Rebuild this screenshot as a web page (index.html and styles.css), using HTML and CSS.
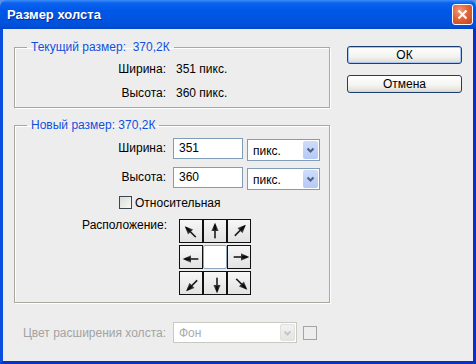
FILE: index.html
```html
<!DOCTYPE html>
<html lang="ru">
<head>
    <meta charset="UTF-8">
    <title>Размер холста</title>
    <link rel="stylesheet" href="styles.css">
</head>
<body>
    <svg width="0" height="0" class="defs">
        <defs>
            <linearGradient id="arrow-fill" x1="0" y1="0" x2="1" y2="0">
                <stop offset="0" stop-color="#666"/>
                <stop offset="0.5" stop-color="#000"/>
                <stop offset="1" stop-color="#666"/>
            </linearGradient>
            <symbol id="arrow" viewBox="0 0 24 24">
                <polygon points="12,3 8,12 16,12" fill="url(#arrow-fill)"/>
                <rect x="11" y="11" width="2" height="9" fill="url(#arrow-fill)"/>
            </symbol>
            <symbol id="chevron" viewBox="0 0 15 18">
                <polyline points="4.5,7.5 7.5,10.5 10.5,7.5" fill="none" stroke-width="2"/>
            </symbol>
        </defs>
    </svg>

    <div class="window">
        <div class="titlebar">
            <span class="title">Размер холста</span>
            <span class="close">
                <svg width="11" height="11" viewBox="0 0 11 11">
                    <path d="M1.5 1.5 L9.5 9.5 M9.5 1.5 L1.5 9.5" stroke="#fff" stroke-width="2.2"/>
                </svg>
            </span>
        </div>

        <div class="dialog">
            <div class="main">
                <div class="groups">
                    <fieldset class="group group-current">
                        <legend>Текущий размер:&nbsp; 370,2К</legend>
                        <div class="info-row first">
                            <span class="lbl">Ширина:</span>
                            <span class="value">351 пикс.</span>
                        </div>
                        <div class="info-row">
                            <span class="lbl">Высота:</span>
                            <span class="value">360 пикс.</span>
                        </div>
                    </fieldset>

                    <fieldset class="group group-new">
                        <legend>Новый размер: 370,2К</legend>
                        <div class="field-row first">
                            <span class="lbl">Ширина:</span>
                            <span class="input">351</span>
                            <span class="select">
                                <span class="select-text">пикс.</span>
                                <span class="drop"><svg width="15" height="18"><use href="#chevron"/></svg></span>
                            </span>
                        </div>
                        <div class="field-row">
                            <span class="lbl">Высота:</span>
                            <span class="input">360</span>
                            <span class="select">
                                <span class="select-text">пикс.</span>
                                <span class="drop"><svg width="15" height="18"><use href="#chevron"/></svg></span>
                            </span>
                        </div>
                        <div class="check-row">
                            <span class="checkbox"></span>
                            <span>Относительная</span>
                        </div>
                        <div class="anchor-row">
                            <span class="lbl">Расположение:</span>
                            <div class="anchor-grid">
                                <span class="cell"><svg><use href="#arrow" transform="rotate(-45 12 12)"/></svg></span>
                                <span class="cell"><svg><use href="#arrow"/></svg></span>
                                <span class="cell"><svg><use href="#arrow" transform="rotate(45 12 12)"/></svg></span>
                                <span class="cell"><svg><use href="#arrow" transform="rotate(-90 12 12)"/></svg></span>
                                <span class="cell cell-center"></span>
                                <span class="cell"><svg><use href="#arrow" transform="rotate(90 12 12)"/></svg></span>
                                <span class="cell"><svg><use href="#arrow" transform="rotate(-135 12 12)"/></svg></span>
                                <span class="cell"><svg><use href="#arrow" transform="rotate(180 12 12)"/></svg></span>
                                <span class="cell"><svg><use href="#arrow" transform="rotate(135 12 12)"/></svg></span>
                            </div>
                        </div>
                    </fieldset>
                </div>

                <div class="buttons">
                    <button class="btn btn-default">ОК</button>
                    <button class="btn">Отмена</button>
                </div>
            </div>

            <div class="ext-row">
                <span class="lbl">Цвет расширения холста:</span>
                <span class="select select-disabled">
                    <span class="select-text">Фон</span>
                    <span class="drop"><svg width="15" height="18"><use href="#chevron"/></svg></span>
                </span>
                <span class="swatch"></span>
            </div>
        </div>
    </div>
</body>
</html>
```

FILE: styles.css
```css
html, body {
    margin: 0;
    padding: 0;
    background: #5a8ee8;
}
body {
    font-family: "Liberation Sans", Arial, sans-serif;
    font-size: 12px;
    line-height: 14px;
    color: #000;
}
.defs {
    position: absolute;
}
.window {
    width: 476px;
    height: 364px;
}
.titlebar {
    height: 29px;
    display: flex;
    align-items: center;
    justify-content: space-between;
    padding: 0 3px 0 7px;
    box-sizing: border-box;
    border-radius: 7px 7px 0 0;
    background: linear-gradient(#3d8cf7 0, #0a62ef 3px, #0058e8 10px, #0055e2 60%, #0050d8 90%, #0046c6 100%);
}
.title {
    font-weight: bold;
    font-size: 13px;
    color: #fff;
    text-shadow: 1px 1px 0 #0b2a9a;
    margin-top: 1px;
}
.close {
    width: 21px;
    height: 21px;
    box-sizing: border-box;
    border: 1px solid #fff;
    border-radius: 3px;
    background: radial-gradient(circle at 35% 30%, #f09a78 0, #e2643a 45%, #c4431c 100%);
    display: flex;
    align-items: center;
    justify-content: center;
}
.dialog {
    height: 335px;
    box-sizing: border-box;
    border: 3px solid #0a4fe0;
    border-top: none;
    border-right-color: #0a2fc8;
    border-bottom-color: #0832c6;
    background: #ededed;
    padding: 11px 0 0 11px;
}
.main {
    display: flex;
    align-items: flex-start;
}
.groups {
    width: 316px;
}
.group {
    margin: 0;
    padding: 0 0 2px 12px;
    min-width: 0;
    border: 1px solid #a8a8a0;
    box-shadow: inset 1px 1px 0 #fff, 1px 1px 0 #fff;
}
.group legend {
    padding: 0 4px;
    color: #1150dc;
    line-height: 14px;
}
.lbl {
    width: 139px;
    text-align: right;
    flex: none;
}
.info-row {
    display: flex;
    height: 24px;
    align-items: center;
}
.info-row.first {
    margin-top: 3px;
}
.info-row .value {
    margin-left: 10px;
}
.group-new {
    margin-top: 10px;
    padding-bottom: 7px;
}
.field-row {
    display: flex;
    align-items: center;
    margin-top: 7px;
    height: 22px;
}
.field-row.first {
    margin-top: 5px;
}
.input {
    margin-left: 7px;
    width: 70px;
    height: 21px;
    box-sizing: border-box;
    border: 1px solid #7f9db9;
    background: #fff;
    padding: 2px 0 0 5px;
}
.select {
    display: flex;
    align-items: center;
    justify-content: space-between;
    margin-left: 4px;
    margin-top: 3px;
    width: 73px;
    height: 22px;
    box-sizing: border-box;
    border: 1px solid #7f9db9;
    background: #fff;
    padding: 1px;
}
.select-text {
    padding: 3px 0 0 4px;
}
.drop {
    width: 15px;
    height: 18px;
    border-radius: 2px;
    background: linear-gradient(#cfdcfb, #b5c9f6);
}
.drop svg {
    display: block;
    stroke: #4d6185;
}
.check-row {
    display: flex;
    align-items: center;
    margin-top: 7px;
    padding-left: 92px;
    height: 15px;
}
.checkbox {
    width: 13px;
    height: 13px;
    box-sizing: border-box;
    border: 1px solid #3b4754;
    background: linear-gradient(135deg, #dcdcd6, #f8f8f6);
    margin-right: 3px;
}
.anchor-row {
    display: flex;
    align-items: flex-start;
    margin-top: 9px;
}
.anchor-row .lbl {
    width: 140px;
    margin-top: -1px;
}
.anchor-grid {
    margin-left: 12px;
    display: grid;
    grid-template-columns: repeat(3, 24px);
    grid-template-rows: repeat(3, 24px);
    row-gap: 2px;
}
.cell {
    box-sizing: border-box;
    border: 1px solid #111;
    background: linear-gradient(#f7f7f7, #e2e2e2);
}
.cell svg {
    display: block;
    width: 22px;
    height: 22px;
}
.cell-center {
    border: 1px solid #8fa5bf;
    border-radius: 2px;
    background: #fff;
}
.buttons {
    margin-left: 17px;
    margin-top: 6px;
    display: flex;
    flex-direction: column;
    gap: 11px;
}
.btn {
    width: 115px;
    height: 18px;
    padding: 0;
    font-family: "Liberation Sans", Arial, sans-serif;
    font-size: 12px;
    color: #000;
    border: 1px solid #1c3f73;
    border-radius: 3px;
    background: linear-gradient(#ffffff, #f3f3ef 60%, #e3e1d8 90%, #d4d0c4);
}
.btn-default {
    box-shadow: inset 0 0 0 1px #a9c4f0;
}
.ext-row {
    display: flex;
    align-items: center;
    margin-top: 19px;
    height: 21px;
    color: #a3a3a3;
}
.ext-row .lbl {
    width: 152px;
}
.ext-row .select {
    margin-left: 7px;
    margin-top: 0;
    width: 124px;
    height: 21px;
}
.select-disabled {
    border-color: #c9c9c4;
}
.select-disabled .select-text {
    padding-top: 1px;
    color: #ababab;
}
.select-disabled .drop {
    height: 17px;
    background: linear-gradient(#f2f2f2, #e4e4e2);
    border: 1px solid #e0e0dd;
    box-sizing: border-box;
}
.select-disabled .drop svg {
    stroke: #c6c6c6;
    margin: -1px 0 0 -1px;
}
.swatch {
    margin-left: 6px;
    width: 14px;
    height: 14px;
    box-sizing: border-box;
    border: 1px solid #a3a3a3;
}
```
